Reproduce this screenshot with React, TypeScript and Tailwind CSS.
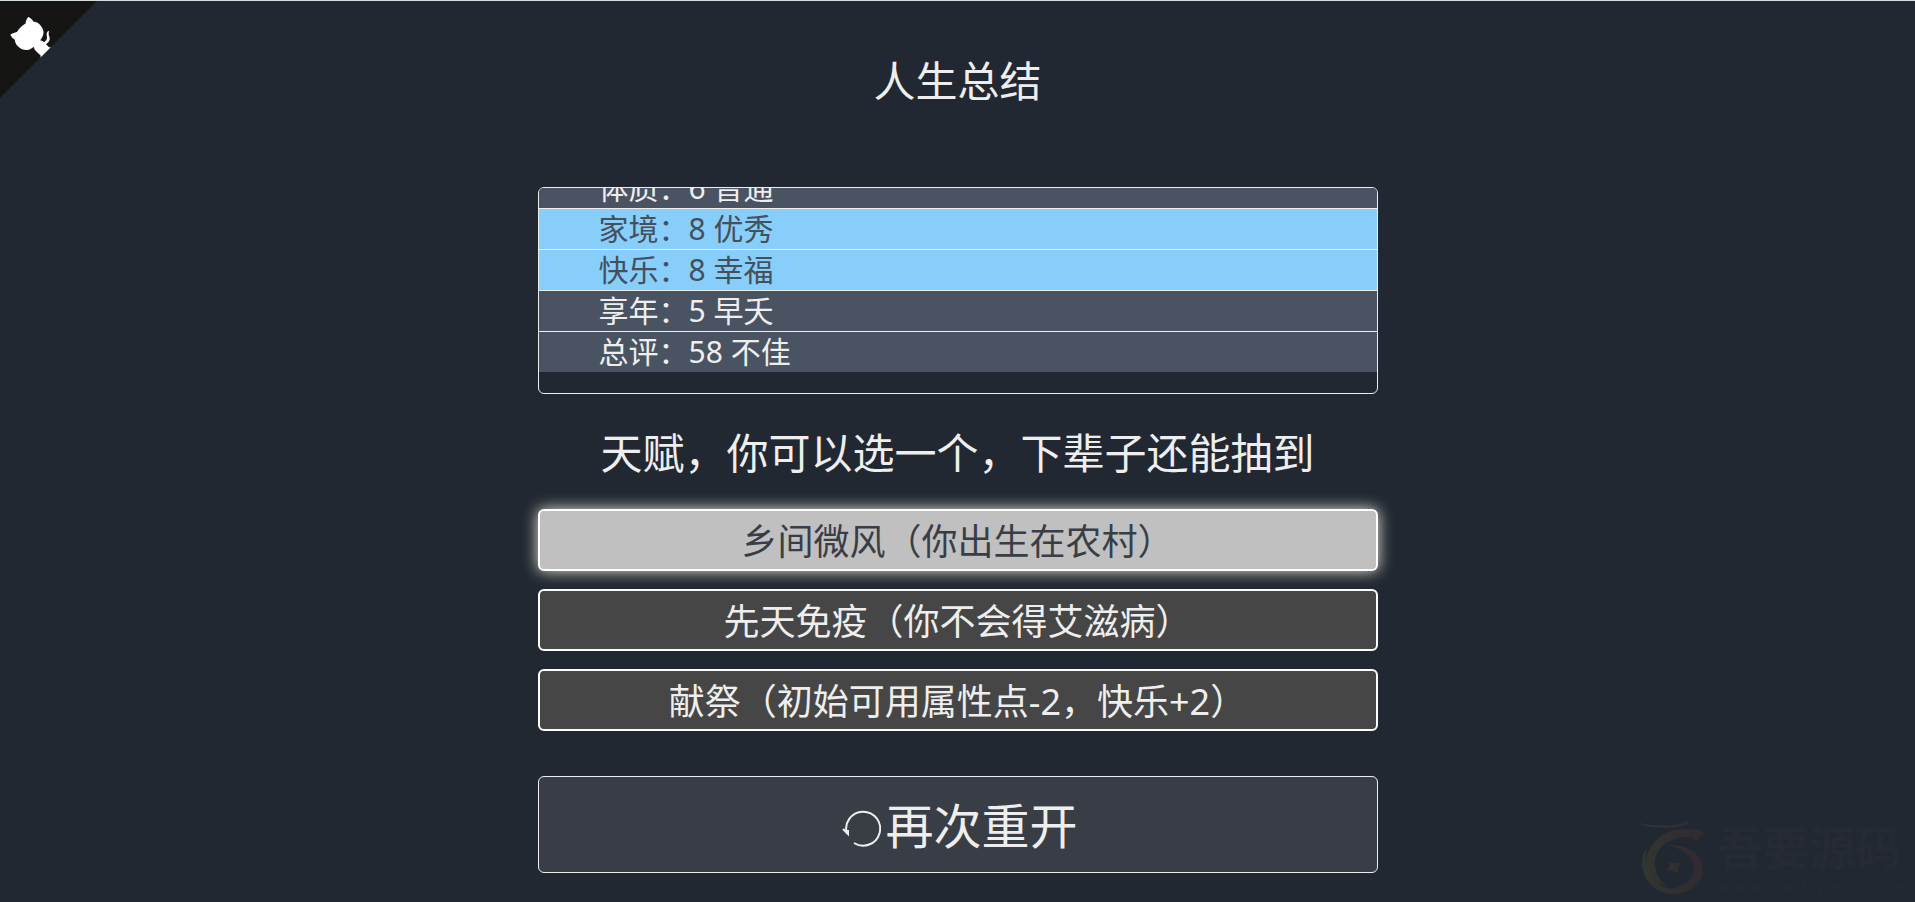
interface Stat {
  label: string;
  value: number;
  judge: string;
  highlight?: boolean;
}

interface Talent {
  id: number;
  name: string;
  description: string;
}

const STATS: Stat[] = [
  { label: '体质', value: 6, judge: '普通' },
  { label: '家境', value: 8, judge: '优秀', highlight: true },
  { label: '快乐', value: 8, judge: '幸福', highlight: true },
  { label: '享年', value: 5, judge: '早夭' },
  { label: '总评', value: 58, judge: '不佳' },
];

const TALENTS: Talent[] = [
  { id: 1, name: '乡间微风', description: '你出生在农村' },
  { id: 2, name: '先天免疫', description: '你不会得艾滋病' },
  { id: 3, name: '献祭', description: '初始可用属性点-2，快乐+2' },
];

const SELECTED_TALENT = 1;

function GithubCorner() {
  return (
    <a href="#github" aria-label="GitHub" className="absolute -left-[3px] top-0">
      <svg viewBox="0 0 250 250" className="size-[100px] -scale-x-100 fill-[#151513] text-white" aria-hidden="true">
        <path d="M0,0 L115,115 L130,115 L142,142 L250,250 L250,0 Z" />
        <path
          d="M128.3,109.0 C113.8,99.7 119.0,89.6 119.0,89.6 C122.0,82.7 120.5,78.6 120.5,78.6 C119.2,72.0 123.4,76.3 123.4,76.3 C127.3,80.9 125.5,87.3 125.5,87.3 C122.9,97.6 130.6,101.9 134.4,103.2"
          fill="currentColor"
        />
        <path
          d="M115.0,115.0 C114.9,115.1 118.7,116.5 119.8,115.4 L133.7,101.6 C136.9,99.2 139.9,98.4 142.2,98.6 C133.8,88.0 127.5,74.4 143.8,58.0 C148.5,53.4 154.0,51.2 159.7,51.0 C160.3,49.4 163.2,43.6 171.4,40.1 C171.4,40.1 176.1,42.5 178.8,56.2 C183.1,58.6 187.2,61.8 190.9,65.4 C194.5,69.0 197.7,73.2 200.1,77.6 C213.8,80.2 216.3,84.9 216.3,84.9 C212.7,93.1 206.9,96.0 205.4,96.6 C205.1,102.4 203.0,107.8 198.3,112.5 C181.9,128.9 168.3,122.5 157.7,114.1 C157.9,116.9 156.7,120.9 152.7,124.9 L141.0,136.5 C139.8,137.7 141.6,141.9 141.8,141.8 Z"
          fill="currentColor"
        />
      </svg>
    </a>
  );
}

function RestartIcon() {
  return (
    <svg
      viewBox="0 0 40 40"
      className="mt-1 size-10 fill-none stroke-current stroke-2"
      aria-hidden="true"
    >
      <path d="M6 26 A17 17 0 1 1 13 35" />
      <path d="M2 21 L7 26 L7 22" />
    </svg>
  );
}

function Watermark() {
  return (
    <div className="pointer-events-none absolute bottom-0 right-3 flex items-start gap-3" aria-hidden="true">
      <svg viewBox="12 9 68 76" className="h-[76px] w-[68px]">
        <defs>
          <linearGradient id="mark" x1="12" x2="80" y1="0" y2="0" gradientUnits="userSpaceOnUse">
            <stop offset="0" stopColor="#30382f" />
            <stop offset="0.6" stopColor="#302f31" />
            <stop offset="1" stopColor="#302b32" />
          </linearGradient>
        </defs>
        <g fill="url(#mark)">
          <path d="M13 12 Q38 17 60 12 L61 9 L65 13 Q50 17 37 17 Q20 16 13 12 Z" />
          <path d="M79 22 L71 31 L67 26 C48 24 33 34 30 49 C29 60 34 70 42 75 C30 72 21 63 21 50 C23 32 40 17 60 18 L74 19 Z" />
          <path d="M42 35 C60 32 78 43 78 58 C78 72 65 83 49 83 C30 83 17 69 17 52 C17 46 19 40 22 36 C16 57 30 74 45 78 C60 76 69 67 69 57 C69 46 57 36 42 35 Z" />
          <path d="M44 50 Q50 54 56 51 Q52 57 53 62 Q47 58 41 60 Q46 56 44 50 Z" />
        </g>
      </svg>
      <div className="w-[186px] pt-1 text-[#262a33]">
        <p className="text-[46px] font-bold leading-[46px]">吾要源码</p>
        <p className="mt-1 flex justify-between text-xs font-semibold leading-7">
          {[...'www.w1ym.com'].map((char, idx) => (
            <span key={idx}>{char}</span>
          ))}
        </p>
      </div>
    </div>
  );
}

export default function App() {
  return (
    <div
      lang="zh-CN"
      className="relative min-h-screen overflow-hidden border-t border-[#d5dddf] bg-[#222831] font-['Noto_Sans','Noto_Sans_CJK_SC',sans-serif] text-[#eeeeee]"
    >
      <GithubCorner />

      <main className="mx-auto flex w-[840px] max-w-full flex-col pt-[50px]">
        <h1 className="text-center text-[42px] leading-[60px]">人生总结</h1>

        <ul className="mt-[76px] flex h-[207px] flex-col justify-end overflow-hidden rounded-md border border-[#eeeeee] pb-[21px] text-[30px] leading-10">
          {STATS.map((stat) => (
            <li
              key={stat.label}
              className={`shrink-0 border-t border-[#eeeeee] pl-[60px] ${
                stat.highlight ? 'bg-[#87cefa] text-[#464f5c]' : 'bg-[#4a5362]'
              }`}
            >
              {stat.label}：{stat.value} {stat.judge}
            </li>
          ))}
        </ul>

        <h2 className="mt-[29px] text-center text-[42px] leading-[60px]">天赋，你可以选一个，下辈子还能抽到</h2>

        <div className="mt-[26px] flex flex-col gap-[18px]">
          {TALENTS.map((talent) => (
            <button
              key={talent.id}
              type="button"
              aria-pressed={talent.id === SELECTED_TALENT}
              className={`h-[62px] rounded-md border-2 border-white pt-1 text-[36px] leading-[54px] ${
                talent.id === SELECTED_TALENT
                  ? 'bg-[#c0c0c0] text-[#393e46] shadow-[0_0_15px_#e6e6dc]'
                  : 'bg-[#464646]'
              }`}
            >
              {talent.name}（{talent.description}）
            </button>
          ))}
        </div>

        <button
          type="button"
          className="mt-[45px] flex h-[97px] items-center justify-center gap-1 rounded-md border border-[#eeeeee] bg-[#393e46] pl-1 pt-[3px] text-[48px] leading-[60px]"
        >
          <RestartIcon />
          再次重开
        </button>
      </main>

      <Watermark />
    </div>
  );
}
